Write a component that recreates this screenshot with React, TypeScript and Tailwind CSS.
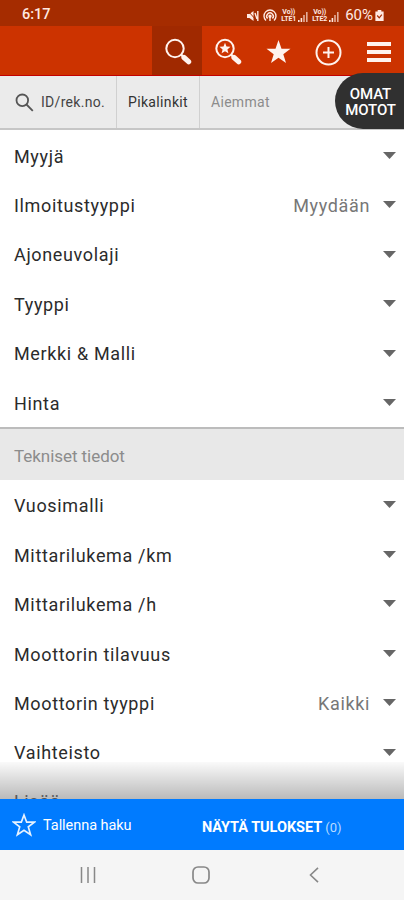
import type { ReactNode } from "react";

interface Field {
  label: string;
  value?: string;
}

const basicFields: Field[] = [
  { label: "Myyjä" },
  { label: "Ilmoitustyyppi", value: "Myydään" },
  { label: "Ajoneuvolaji" },
  { label: "Tyyppi" },
  { label: "Merkki & Malli" },
  { label: "Hinta" },
];

const technicalFields: Field[] = [
  { label: "Vuosimalli" },
  { label: "Mittarilukema /km" },
  { label: "Mittarilukema /h" },
  { label: "Moottorin tilavuus" },
  { label: "Moottorin tyyppi", value: "Kaikki" },
  { label: "Vaihteisto" },
];

function FieldRow({ label, value }: Field) {
  return (
    <div className="flex h-[49.45px] shrink-0 items-center pl-3.5 pr-2 pt-[1.4px]">
      <span className="flex-1 text-[18px] tracking-[0.65px] text-[#2b2b2b]">
        {label}
      </span>
      {value && (
        <span className="mr-[13px] text-[18px] tracking-[0.65px] text-[#777]">
          {value}
        </span>
      )}
      <svg className="mb-[1.6px] h-[7px] w-[13px]" viewBox="0 0 13 7">
        <path d="M0 0h13L6.5 7z" fill="#666" />
      </svg>
    </div>
  );
}

function SignalIcon({ line }: { line: string }) {
  return (
    <div className="flex items-end gap-[2px]">
      <div className="flex flex-col items-center text-[7px] font-bold leading-[6.5px] tracking-[-0.1px]">
        <span>Vo))</span>
        <span>{line}</span>
      </div>
      <svg className="h-[10px] w-[10px]" viewBox="0 0 10 10" fill="#ffe5dc">
        <path d="M0 8h1.6v2H0zM2.6 6h1.6v4H2.6z" />
        <path d="M5.2 3h1.6v7H5.2zM8 0h1.6v10H8z" opacity=".7" />
      </svg>
    </div>
  );
}

function StatusBar() {
  return (
    <div className="flex h-[26px] items-center bg-[#a52c00] pl-[22px] pr-[20px] pt-[5px] text-[#ffe9e2]">
      <span className="flex-1 text-[14.5px] font-medium leading-none">6:17</span>
      <div className="flex items-center">
        <svg className="mr-[4px] h-3 w-3" viewBox="0 0 12 12" fill="none" stroke="currentColor">
          <path d="M0 4h2.5L6.5 1v10L2.5 8H0z" fill="currentColor" stroke="none" />
          <path d="M1 1l9 10" stroke="#a52c00" strokeWidth="1" />
          <path d="M8 3l2 6M10.8 1v10" strokeWidth="1.4" />
        </svg>
        <svg className="mr-[4px] h-[13px] w-[14px]" viewBox="0 0 14 13" fill="none" stroke="currentColor" strokeWidth="1.4">
          <path d="M3 11.5A6 6 0 1 1 11 11.5" />
          <path d="M4.6 9.5A3.3 3.3 0 1 1 9.4 9.5" />
          <circle cx="7" cy="7.3" r="1" fill="currentColor" />
          <path d="M7 8v4" />
        </svg>
        <SignalIcon line="LTE1" />
        <div className="w-[4px]" />
        <SignalIcon line="LTE2" />
        <span className="ml-[6px] text-[15px] leading-none">60%</span>
        <svg className="ml-[2px] h-[11px] w-[9px]" viewBox="0 0 9 12">
          <path d="M2.5 0h4v1.5H9V12H0V1.5h2.5z" fill="#ffe9e2" />
          <path d="M2 6l2.2 2.6L7 5" fill="none" stroke="#a52c00" strokeWidth="1.3" />
        </svg>
      </div>
    </div>
  );
}

function HeaderButton({ active, children }: { active?: boolean; children: ReactNode }) {
  return (
    <button
      className={`flex h-full w-[50.4px] items-center justify-center pl-px pt-[3px] ${active ? "bg-[#a02900]" : ""}`}
    >
      {children}
    </button>
  );
}

function Header() {
  return (
    <div className="flex h-[50px] justify-end border-b border-[#c40000] bg-[#cc3300]">
      <HeaderButton active>
        <svg className="h-7 w-7" viewBox="0 0 28 28" fill="none" stroke="#fff3ee">
          <circle cx="11" cy="10.5" r="8.7" strokeWidth="2" />
          <path d="M17 16.5l3 3" strokeWidth="2.4" />
          <path d="M20 19.5l4.6 4.2" strokeWidth="5.2" strokeLinecap="round" />
        </svg>
      </HeaderButton>
      <HeaderButton>
        <svg className="h-7 w-7" viewBox="0 0 28 28" fill="none" stroke="#fff3ee">
          <circle cx="11" cy="10.5" r="8.7" strokeWidth="2" />
          <path
            d="M11 4.8l1.5 3.7 4 .3-3.1 2.6 1 3.9-3.4-2.1-3.4 2.1 1-3.9-3.1-2.6 4-.3z"
            fill="#fff3ee"
            stroke="none"
          />
          <path d="M17 16.5l3 3" strokeWidth="2.4" />
          <path d="M20 19.5l4.6 4.2" strokeWidth="5.2" strokeLinecap="round" />
        </svg>
      </HeaderButton>
      <HeaderButton>
        <svg className="h-6 w-[25px]" viewBox="0 0 24 24" fill="#fff3ee">
          <path d="M12 0l3 8.8h9l-7.2 5.4L19.5 23 12 17.7 4.5 23l2.7-8.8L0 8.8h9z" />
        </svg>
      </HeaderButton>
      <HeaderButton>
        <svg className="h-[27px] w-[27px]" viewBox="0 0 27 27" fill="none" stroke="#fff3ee">
          <circle cx="13.5" cy="13.5" r="12" strokeWidth="2" />
          <path d="M13.5 8v11M8 13.5h11" strokeWidth="2" />
        </svg>
      </HeaderButton>
      <HeaderButton>
        <svg className="h-[22px] w-6" viewBox="0 0 24 22" fill="#fff3ee">
          <path d="M0 1h24v4H0zM0 9h24v4H0zM0 17h24v4H0z" />
        </svg>
      </HeaderButton>
    </div>
  );
}

function QuickBar() {
  return (
    <div className="relative flex h-[54px] border-b-2 border-[#c6c6c6] bg-[#ebebeb] text-[14px] text-[#444]">
      <div className="flex w-[117px] items-center border-r border-[#d0d0d0] pl-[15px]">
        <svg className="mr-[7px] h-[19px] w-[19px]" viewBox="0 0 19 19" fill="none" stroke="#555" strokeWidth="1.8">
          <circle cx="7.3" cy="7.3" r="5.8" />
          <path d="M11.5 11.5l6.3 6.3" />
        </svg>
        <span className="tracking-[0.3px]">ID/rek.no.</span>
      </div>
      <div className="flex w-[83px] items-center justify-center border-r border-[#d0d0d0] tracking-[0.35px] text-[#333]">
        Pikalinkit
      </div>
      <div className="flex items-center pl-[11px] tracking-[0.3px] text-[#8c8c8c]">Aiemmat</div>
      <button className="absolute -top-[3px] right-0 flex h-[56px] w-[69px] items-center justify-center rounded-l-[28px] bg-[#303030] pl-0.5 pt-0.5 text-center text-[15px] font-medium leading-[16.5px] tracking-[-0.1px] text-white">
        OMAT MOTOT
      </button>
    </div>
  );
}

function ActionBar() {
  return (
    <div className="flex h-[51px] items-center bg-[#007bff] text-white">
      <svg className="ml-[12px] h-6 w-6" viewBox="0 0 24 24" fill="none" stroke="#e6f2ff" strokeWidth="1.7">
        <path d="M12 2l2.7 7.2h7.7l-6.1 4.7 2.3 7.9-6.6-4.6-6.6 4.6 2.3-7.9L1.6 9.2h7.7z" />
      </svg>
      <span className="ml-[7px] w-[159px] pt-0.5 text-[14.5px] tracking-[-0.05px]">Tallenna haku</span>
      <span className="pt-1.5 text-[14.5px] font-bold tracking-[-0.05px]">
        NÄYTÄ TULOKSET <span className="text-[13px] font-normal text-[#b8dcff]">(0)</span>
      </span>
    </div>
  );
}

function SystemNav() {
  return (
    <div className="flex h-[50px] items-center bg-[#f5f5f5]">
      <svg className="ml-[80px] h-4 w-4" viewBox="0 0 16 16" fill="none" stroke="#888" strokeWidth="1.5">
        <path d="M1.5 0v16M8 0v16M14.5 0v16" />
      </svg>
      <svg className="ml-[96px] h-[18px] w-[18px]" viewBox="0 0 18 18" fill="none" stroke="#888" strokeWidth="1.7">
        <rect x="1" y="1" width="16" height="16" rx="5" />
      </svg>
      <svg className="ml-[99px] h-4 w-[10px]" viewBox="0 0 10 16" fill="none" stroke="#888" strokeWidth="1.6">
        <path d="M9 .8L1.5 8 9 15.2" />
      </svg>
    </div>
  );
}

export default function App() {
  return (
    <div className="flex h-[900px] w-[404px] flex-col overflow-hidden bg-white font-['Roboto',sans-serif]">
      <StatusBar />
      <Header />
      <QuickBar />
      <div className="relative flex min-h-0 flex-1 flex-col overflow-hidden pt-[0.7px]">
        {basicFields.map((field) => (
          <FieldRow key={field.label} {...field} />
        ))}
        <div className="flex h-[53px] shrink-0 items-center border-t-2 border-[#bcbcbc] bg-[#e8e8e8] pl-3.5 pt-[3px] text-[17px] tracking-[-0.05px] text-[#8c8c8c]">
          Tekniset tiedot
        </div>
        {technicalFields.map((field) => (
          <FieldRow key={field.label} {...field} />
        ))}
        {/* Next row, mostly hidden behind the action bar */}
        <div className="shrink-0 pl-3.5 pt-[11px] text-[18px] leading-[27px] tracking-[0.65px] text-[#777]">
          Lisää
        </div>
        {/* Fade above the action bar */}
        <div className="absolute inset-x-0 bottom-0 h-[37px] bg-gradient-to-b from-black/2 to-black/27" />
      </div>
      <ActionBar />
      <SystemNav />
    </div>
  );
}
